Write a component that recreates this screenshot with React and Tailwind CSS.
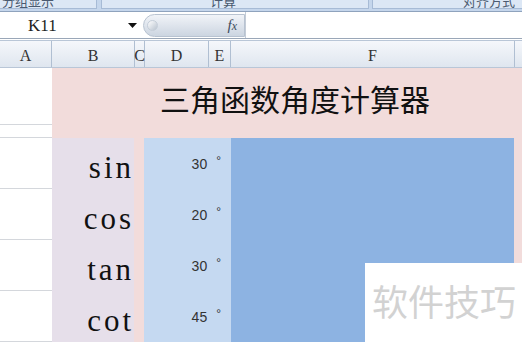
import React from "react";

const rows = [
  { fn: "sin", deg: 30 },
  { fn: "cos", deg: 20 },
  { fn: "tan", deg: 30 },
  { fn: "cot", deg: 45 },
];

const headers = [
  { label: "A", w: "w-[52px]" },
  { label: "B", w: "w-[83px]" },
  { label: "C", w: "w-[10px]" },
  { label: "D", w: "w-[64px]" },
  { label: "E", w: "w-[22px]" },
  { label: "F", w: "w-[284px]" },
];

export default function App() {
  return (
    <div className="relative w-[522px] h-[342px] overflow-hidden bg-white">
      {/* Ribbon remains */}
      <div className="flex h-[12px] bg-[#c5d6ec] border-b border-[#8fa3bd] overflow-hidden">
        <div className="w-[97px] h-[9px] bg-[#dce7f5] border-r border-b border-[#a7bbd6] overflow-hidden">
          <div className="-mt-[7px] pl-[2px] text-[13px] leading-[15px] text-[#4a5a70] font-['Noto_Sans_CJK_SC',sans-serif]">
            分组显示
          </div>
        </div>
        <div className="ml-[4px] w-[268px] h-[9px] bg-[#dce7f5] border-x border-b border-[#a7bbd6] overflow-hidden">
          <div className="-mt-[7px] pl-[108px] text-[13px] leading-[15px] text-[#4a5a70] font-['Noto_Sans_CJK_SC',sans-serif]">
            计算
          </div>
        </div>
        <div className="ml-[3px] flex-1 h-[9px] bg-[#dce7f5] border-l border-b border-[#a7bbd6] overflow-hidden">
          <div className="-mt-[7px] pl-[90px] text-[13px] leading-[15px] text-[#4a5a70] font-['Noto_Sans_CJK_SC',sans-serif]">
            对齐方式
          </div>
        </div>
      </div>

      {/* Formula bar */}
      <div className="flex h-[27px] items-center border-b border-[#9aa7b8] bg-white">
        <div className="w-[124px] pl-[28px] text-[17px] leading-none text-[#222] font-['Liberation_Serif',serif]">
          K11
        </div>
        <svg width="9" height="5" viewBox="0 0 9 5" className="ml-[4px]">
          <path d="M0 0 H9 L4.5 5 Z" fill="#111" />
        </svg>
        <div className="ml-[6px] relative flex items-center justify-end w-[102px] h-[23px] rounded-l-full bg-gradient-to-b from-[#f1f4f8] to-[#ccd5e1] border border-[#b8c3d1] pr-[7px]">
          <div className="absolute left-[3px] top-[5px] w-[11px] h-[11px] rounded-full bg-gradient-to-br from-[#ffffff] to-[#b9c3cf] border border-[#c5ced9]" />
          <span className="text-[15px] italic leading-none text-[#3e4c5e] font-['Liberation_Serif',serif]">
            f<span className="text-[12px]">x</span>
          </span>
        </div>
        <div className="flex-1 h-full border-l border-[#c4ccd7]" />
      </div>

      {/* Column headers */}
      <div className="flex h-[28px] mt-[1px] border-t border-[#b9c6d7] border-b border-[#9fb1c8] bg-gradient-to-b from-[#f5f7fb] to-[#dfe6ef]">
        {headers.map((h) => (
          <div
            key={h.label}
            className={`${h.w} shrink-0 flex items-center justify-center pt-[3px] border-r border-[#b0bfd2] text-[16px] text-[#333] font-['Liberation_Serif',serif]`}
          >
            {h.label}
          </div>
        ))}
        <div className="flex-1" />
      </div>

      {/* Sheet body */}
      <div className="flex">
        <div className="w-[52px] shrink-0 flex flex-col bg-white">
          <div className="h-[57px] border-b border-[#d4d7dc]" />
          <div className="h-[13px] border-b border-[#d4d7dc]" />
          {rows.map((r) => (
            <div key={r.fn} className="h-[51px] border-b border-[#d4d7dc]" />
          ))}
        </div>

        <div className="flex-1 flex flex-col bg-[#f2dcdb]">
          <div className="h-[70px] pt-[15px] pl-[108px] text-[30px] leading-[30px] text-[#111] font-['Noto_Sans_CJK_SC',sans-serif]">
            三角函数角度计算器
          </div>
          {rows.map((r) => (
            <div key={r.fn} className="flex h-[51px]">
              <div className="w-[82px] shrink-0 flex items-end justify-end pb-[6px] bg-[#e6dfea] text-[31px] leading-[31px] tracking-[3px] text-[#111] font-['Liberation_Serif',serif]">
                {r.fn}
              </div>
              <div className="w-[10px] shrink-0" />
              <div className="w-[87px] shrink-0 flex items-center justify-end pr-[10px] pt-[1px] bg-[#c5d9f1] text-[14px] text-[#333] font-['Liberation_Sans',sans-serif]">
                {r.deg}
                <span className="ml-[9px] -mt-[6px] text-[12px]">°</span>
              </div>
              <div className="w-[283px] shrink-0 bg-[#8db3e2]" />
              <div className="flex-1" />
            </div>
          ))}
        </div>
      </div>

      {/* Watermark */}
      <div className="absolute left-[365px] top-[263px] w-[157px] h-[79px] bg-white pl-[7px] pt-[18px] text-[36px] leading-[38px] text-[#d2d2d2] font-['Noto_Sans_CJK_SC',sans-serif]">
        软件技巧
      </div>
    </div>
  );
}
